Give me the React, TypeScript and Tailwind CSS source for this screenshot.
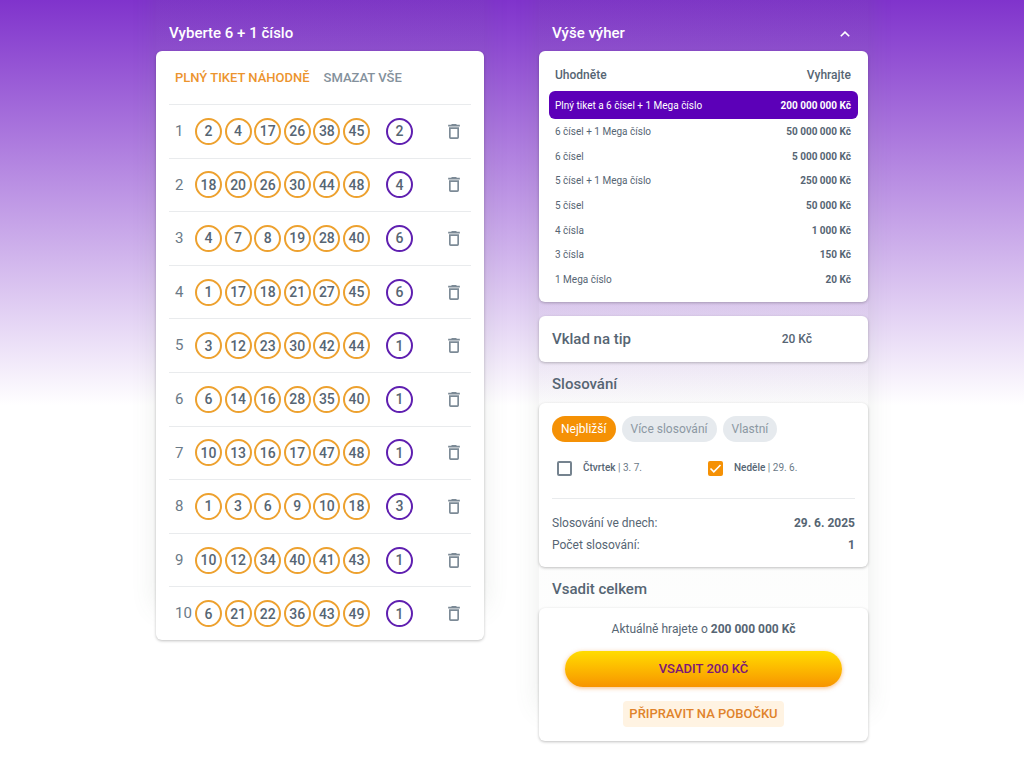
import { useState } from 'react';
import type { ReactNode } from 'react';

type Tip = { numbers: number[]; mega: number };

const initialTips: Tip[] = [
  { numbers: [2, 4, 17, 26, 38, 45], mega: 2 },
  { numbers: [18, 20, 26, 30, 44, 48], mega: 4 },
  { numbers: [4, 7, 8, 19, 28, 40], mega: 6 },
  { numbers: [1, 17, 18, 21, 27, 45], mega: 6 },
  { numbers: [3, 12, 23, 30, 42, 44], mega: 1 },
  { numbers: [6, 14, 16, 28, 35, 40], mega: 1 },
  { numbers: [10, 13, 16, 17, 47, 48], mega: 1 },
  { numbers: [1, 3, 6, 9, 10, 18], mega: 3 },
  { numbers: [10, 12, 34, 40, 41, 43], mega: 1 },
  { numbers: [6, 21, 22, 36, 43, 49], mega: 1 },
];

const prizes = [
  ['6 čísel + 1 Mega číslo', '50 000 000 Kč'],
  ['6 čísel', '5 000 000 Kč'],
  ['5 čísel + 1 Mega číslo', '250 000 Kč'],
  ['5 čísel', '50 000 Kč'],
  ['4 čísla', '1 000 Kč'],
  ['3 čísla', '150 Kč'],
  ['1 Mega číslo', '20 Kč'],
];

const modes = ['Nejbližší', 'Více slosování', 'Vlastní'];

function Column({ children }: { children: ReactNode }) {
  return (
    <section className="bg-linear-to-b from-[#5a6e5a]/6 to-[#5a6e5a]/0 shadow-[0_-32px_24px_rgba(90,110,90,0.12)]">
      {children}
    </section>
  );
}

function Card({ className = '', children }: { className?: string; children: ReactNode }) {
  return (
    <div className={`rounded-md bg-white shadow-[0_1px_3px_rgba(0,0,0,0.25)] ${className}`}>
      {children}
    </div>
  );
}

function TrashIcon() {
  return (
    <svg width="12" height="15" viewBox="5 3 14 18" fill="currentColor" aria-hidden="true">
      <path d="M6 19a2 2 0 0 0 2 2h8a2 2 0 0 0 2-2V7H6v12zM8 9h8v10H8V9zm7.5-5-1-1h-5l-1 1H5v2h14V4z" />
    </svg>
  );
}

function TipRow({ index, tip, onRemove }: { index: number; tip: Tip; onRemove: () => void }) {
  return (
    <li className="flex flex-1 items-center border-t border-[#e9ebed] pl-1.5">
      <span className="w-5 text-[15px] text-[#6b7a87]">{index}</span>
      <div className="flex w-[175px] justify-between">
        {tip.numbers.map((n) => (
          <span
            key={n}
            className="flex size-[27px] items-center justify-center rounded-full border-2 border-[#eda12f] text-sm font-medium text-[#566573]"
          >
            {n}
          </span>
        ))}
      </div>
      <span className="ml-4 flex size-[27px] items-center justify-center rounded-full border-2 border-[#5f1fb0] text-sm font-medium text-[#566573]">
        {tip.mega}
      </span>
      <button
        type="button"
        aria-label="Smazat"
        onClick={onRemove}
        className="mr-[11px] ml-auto cursor-pointer text-[#7c8a96]"
      >
        <TrashIcon />
      </button>
    </li>
  );
}

function Checkbox({ id, day, date, checked, onChange }: {
  id: string;
  day: string;
  date: string;
  checked: boolean;
  onChange: () => void;
}) {
  return (
    <div className="flex items-center">
      <span className="relative flex size-[15px]">
        <input
          id={id}
          type="checkbox"
          checked={checked}
          onChange={onChange}
          className="size-[15px] appearance-none rounded-xs border-2 border-[#75838f] checked:border-[#f59105] checked:bg-[#f59105]"
        />
        {checked && (
          <svg
            className="pointer-events-none absolute inset-0"
            width="15"
            height="15"
            viewBox="0 0 15 15"
            fill="none"
            stroke="#fff"
            strokeWidth="1.6"
          >
            <path d="M2.5 7.5 5.8 10.8 12.5 4" />
          </svg>
        )}
      </span>
      <label htmlFor={id} className="pl-[11px] text-[10px] leading-4 text-[#6b7a87]">
        <span className="font-medium text-[#566573]">{day}</span> | {date}
      </label>
    </div>
  );
}

export default function App() {
  const [tips, setTips] = useState(initialTips);
  const [open, setOpen] = useState(true);
  const [mode, setMode] = useState(modes[0]);
  const [thursday, setThursday] = useState(false);
  const [sunday, setSunday] = useState(true);

  return (
    <div className="min-h-screen bg-white bg-[linear-gradient(#8033cc,#ffffff_405px)] font-[Roboto,sans-serif] text-[#566573]">
      <main className="mx-auto grid max-w-[712px] grid-cols-[328fr_329fr] items-start gap-[55px]">
        {/* Tips */}
        <Column>
          <h2 className="flex h-[51px] items-center pt-4 pl-[13px] text-[15px] font-medium text-white">
            Vyberte 6 + 1 číslo
          </h2>
          <Card className="px-[13px]">
            <div className="flex h-[53px] items-center gap-3.5 pl-1.5 text-[13px] font-medium">
              <button type="button" className="cursor-pointer text-[#ec942e]">
                PLNÝ TIKET NÁHODNĚ
              </button>
              <button
                type="button"
                className="cursor-pointer text-[#84919c]"
                onClick={() => setTips([])}
              >
                SMAZAT VŠE
              </button>
            </div>
            <ol className="flex min-h-[536px] flex-col">
              {tips.map((tip, i) => (
                <TipRow
                  key={tip.numbers.join('-')}
                  index={i + 1}
                  tip={tip}
                  onRemove={() => setTips(tips.filter((t) => t !== tip))}
                />
              ))}
            </ol>
          </Card>
        </Column>

        <Column>
          {/* Prizes */}
          <h2 className="flex h-[51px] items-center justify-between pt-4 pr-[18px] pl-[13px] text-[15px] font-medium text-white">
            Výše výher
            <button
              type="button"
              aria-label="Zobrazit výhry"
              aria-expanded={open}
              className="cursor-pointer"
              onClick={() => setOpen(!open)}
            >
              <svg width="10" height="6" viewBox="0 0 10 6" fill="none" stroke="currentColor" strokeWidth="1.6">
                <path d="M.8 5.3 5 1.1l4.2 4.2" />
              </svg>
            </button>
          </h2>
          {open && (
            <Card className="px-2.5 pt-2 pb-2.5">
              <table className="w-full text-[10px]">
                <thead>
                  <tr className="h-8 text-xs">
                    <th className="pl-1.5 text-left font-medium">Uhodněte</th>
                    <th className="pr-[7px] text-right font-medium">Vyhrajte</th>
                  </tr>
                </thead>
                <tbody>
                  <tr className="h-7 text-white">
                    <td className="rounded-l-md bg-[#5c00b8] pl-1.5">Plný tiket a 6 čísel + 1 Mega číslo</td>
                    <td className="rounded-r-md bg-[#5c00b8] pr-[7px] text-right font-bold">200 000 000 Kč</td>
                  </tr>
                  {prizes.map(([label, prize]) => (
                    <tr key={label} className="h-[25px] nth-[3n]:h-6">
                      <td className="pl-1.5">{label}</td>
                      <td className="pr-[7px] text-right font-bold">{prize}</td>
                    </tr>
                  ))}
                </tbody>
              </table>
            </Card>
          )}

          <Card className="mt-3.5 flex h-[46px] items-center justify-between pr-14 pl-[13px]">
            <h2 className="text-[15px] font-medium">Vklad na tip</h2>
            <span className="text-xs font-medium">20 Kč</span>
          </Card>

          {/* Draws */}
          <h2 className="flex h-[41px] items-center pt-1 pl-[13px] text-[15px] font-medium">Slosování</h2>
          <Card className="px-[13px] pt-[13px] pb-3.5">
            <div className="flex gap-1.5">
              {modes.map((m) => (
                <button
                  key={m}
                  type="button"
                  onClick={() => setMode(m)}
                  className={`h-[26px] cursor-pointer rounded-full px-[9px] text-xs ${
                    m === mode ? 'bg-[#f59105] text-white' : 'bg-[#e6eaee] text-[#8c98a3]'
                  }`}
                >
                  {m}
                </button>
              ))}
            </div>
            <div className="grid grid-cols-2 gap-x-1 pt-[18px] pb-[22px] pl-[5px]">
              <Checkbox
                id="thursday"
                day="Čtvrtek"
                date="3. 7."
                checked={thursday}
                onChange={() => setThursday(!thursday)}
              />
              <Checkbox
                id="sunday"
                day="Neděle"
                date="29. 6."
                checked={sunday}
                onChange={() => setSunday(!sunday)}
              />
            </div>
            <dl className="grid grid-cols-2 gap-y-1.5 border-t border-[#e9ebed] pt-4 text-xs">
              <dt>Slosování ve dnech:</dt>
              <dd className="text-right font-bold">29. 6. 2025</dd>
              <dt>Počet slosování:</dt>
              <dd className="text-right font-bold">1</dd>
            </dl>
          </Card>

          {/* Total */}
          <h2 className="flex h-[41px] items-center pt-1 pl-[13px] text-[15px] font-medium">Vsadit celkem</h2>
          <Card className="flex flex-col items-center px-[26px] pt-[13px] pb-3.5">
            <p className="text-xs">
              Aktuálně hrajete o <b>200 000 000 Kč</b>
            </p>
            <button
              type="button"
              className="mt-3.5 h-9 w-full cursor-pointer rounded-full bg-linear-to-b from-[#ffdc00] to-[#f79400] text-[13px] font-medium text-[#7b1778] shadow-[0_1px_4px_rgba(240,120,0,0.5)]"
            >
              VSADIT 200 KČ
            </button>
            <button
              type="button"
              className="mt-3.5 h-[26px] cursor-pointer rounded-sm bg-[#fff3e2] px-1.5 text-[13px] font-medium text-[#e0832b]"
            >
              PŘIPRAVIT NA POBOČKU
            </button>
          </Card>
        </Column>
      </main>
    </div>
  );
}
